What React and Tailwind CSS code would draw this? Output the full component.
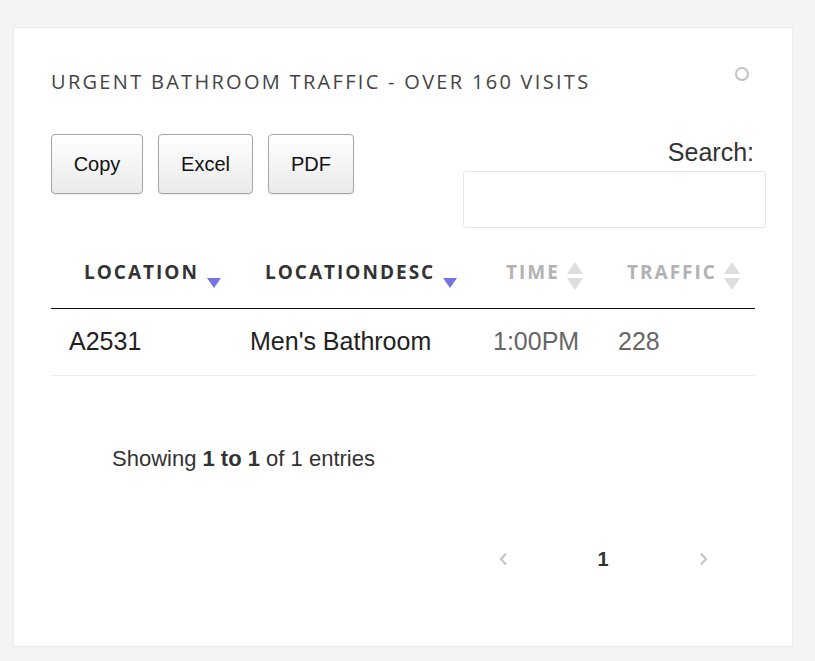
import React from "react";

const SortDown = () => (
  <svg width="14" height="10" viewBox="0 0 14 10" className="ml-[8px] mt-[22px] shrink-0">
    <polygon points="0,0 14,0 7,10" fill="#7474e4" />
  </svg>
);

const SortBoth = () => (
  <svg width="16" height="28" viewBox="0 0 16 28" className="ml-[7px] mt-[8px] shrink-0">
    <polygon points="8,0 16,12 0,12" fill="#dedede" />
    <polygon points="0,16 16,16 8,28" fill="#dedede" />
  </svg>
);

const ChevronL = () => (
  <svg width="9" height="14" viewBox="0 0 9 14">
    <polyline points="7,1.5 2,7 7,12.5" fill="none" stroke="#c6c6c6" strokeWidth="2.2" />
  </svg>
);

const ChevronR = () => (
  <svg width="9" height="14" viewBox="0 0 9 14">
    <polyline points="2,1.5 7,7 2,12.5" fill="none" stroke="#c6c6c6" strokeWidth="2.2" />
  </svg>
);

export default function App() {
  const buttons = [
    { label: "Copy", w: "w-[92px]" },
    { label: "Excel", w: "w-[95px]" },
    { label: "PDF", w: "w-[86px]" },
  ];

  return (
    <div className="min-h-[661px] bg-[#f4f4f4] pt-[27px] pl-[13px] font-['Liberation_Sans',Arial,sans-serif]">
      <div className="w-[780px] h-[620px] bg-white border border-[#ebebeb] pl-[37px] pr-[26px] pt-[42px]">
        {/* --- TITLE --- */}
        <div className="flex justify-between items-start">
          <h2 className="font-['Open_Sans',sans-serif] text-[20px] leading-[24px] tracking-[2.3px] text-[#444]">
            URGENT BATHROOM TRAFFIC - OVER 160 VISITS
          </h2>
          <div className="w-[14px] h-[14px] rounded-full border-[2.5px] border-[#c2c2c2] mt-[-3px] mr-[17px]"></div>
        </div>

        {/* --- TOOLBAR --- */}
        <div className="mt-[40px] flex justify-between items-start">
          <div className="flex gap-[15px]">
            {buttons.map((b) => (
              <button
                key={b.label}
                className={`${b.w} h-[60px] rounded-[4px] border border-[#a6a6a6] bg-gradient-to-b from-white to-[#eaeaea] text-[20px] text-[#111] shadow-[0_1px_1px_rgba(0,0,0,0.08)]`}
              >
                {b.label}
              </button>
            ))}
          </div>
          <div className="flex flex-col items-end pt-[3px]">
            <label className="text-[25px] leading-[30px] text-[#333] mr-[12px]">Search:</label>
            <input
              type="text"
              className="mt-[4px] w-[303px] h-[57px] border border-[#e4e4e4] rounded-[3px] outline-none"
            />
          </div>
        </div>

        {/* --- TABLE --- */}
        <table className="mt-[8px] w-[704px] table-fixed border-collapse text-left">
          <colgroup>
            <col className="w-[181px]" />
            <col className="w-[243px]" />
            <col className="w-[125px]" />
            <col className="w-[155px]" />
          </colgroup>
          <thead>
            <tr className="border-b border-[#111] font-['Open_Sans',sans-serif] text-[19px] font-extrabold tracking-[2px]">
              <th className="h-[72px] p-0 pl-[33px]">
                <div className="flex items-center text-[#333]">
                  LOCATION <SortDown />
                </div>
              </th>
              <th className="h-[72px] p-0 pl-[33px]">
                <div className="flex items-center text-[#333]">
                  LOCATIONDESC <SortDown />
                </div>
              </th>
              <th className="h-[72px] p-0 pl-[31px]">
                <div className="flex items-center text-[#b2b2b2]">
                  TIME <SortBoth />
                </div>
              </th>
              <th className="h-[72px] p-0 pl-[27px]">
                <div className="flex items-center text-[#b2b2b2]">
                  TRAFFIC <SortBoth />
                </div>
              </th>
            </tr>
          </thead>
          <tbody>
            <tr className="border-b border-[#ececec] text-[25px]">
              <td className="h-[67px] p-0 pl-[18px] text-[#222]">A2531</td>
              <td className="h-[67px] p-0 pl-[18px] text-[#222] whitespace-nowrap">Men's Bathroom</td>
              <td className="h-[67px] p-0 pl-[18px] text-[#666]">1:00PM</td>
              <td className="h-[67px] p-0 pl-[18px] text-[#666]">228</td>
            </tr>
          </tbody>
        </table>

        {/* --- INFO --- */}
        <p className="mt-[70px] pl-[61px] text-[22px] leading-[26px] text-[#333]">
          Showing <span className="font-bold">1 to 1</span> of 1 entries
        </p>

        {/* --- PAGINATION --- */}
        <div className="mt-[67px] mr-[13px] flex justify-end">
          <div className="w-[100px] h-[40px] flex items-center justify-center">
            <ChevronL />
          </div>
          <div className="w-[100px] h-[40px] flex items-center justify-center text-[20px] font-bold text-[#333]">
            1
          </div>
          <div className="w-[100px] h-[40px] flex items-center justify-center">
            <ChevronR />
          </div>
        </div>
      </div>
    </div>
  );
}
